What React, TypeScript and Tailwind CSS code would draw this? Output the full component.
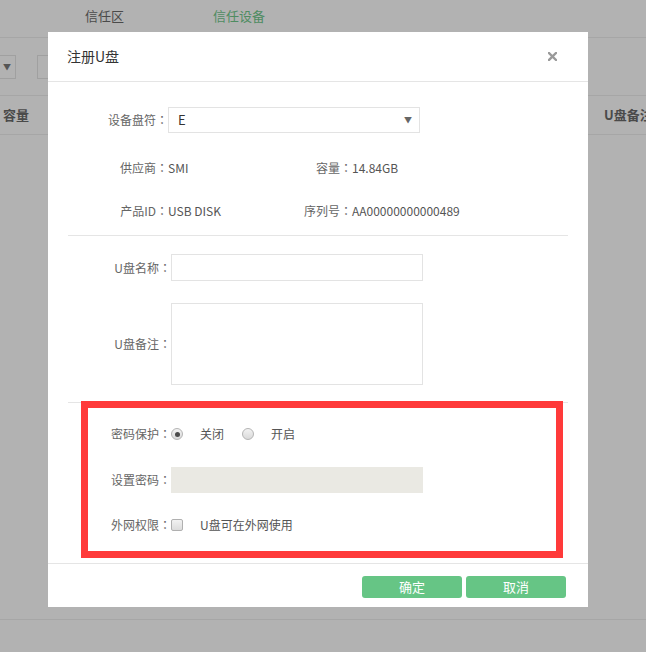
const font = "font-['Noto_Sans_CJK_SC','Noto_Sans',sans-serif]";

// fullwidth colon centred like the reference (TC puts it in the middle of the em box)
function Colon({ text }: { text: string }) {
  if (!text.endsWith("：")) return <>{text}</>;
  return (
    <>
      {text.slice(0, -1)}
      <span className="font-['Noto_Sans_CJK_TC',sans-serif]">：</span>
    </>
  );
}

function Radio({ checked }: { checked?: boolean }) {
  return (
    <span className="flex h-[12px] w-[12px] items-center justify-center rounded-full border border-[#b4b4b4] bg-gradient-to-b from-[#f2f2f2] to-[#d9d9d9]">
      {checked ? <span className="h-[5px] w-[5px] rounded-full bg-[#4a4a4a]" /> : null}
    </span>
  );
}

function Field({ label, width = "w-[123px]", children }: { label: string; width?: string; children: React.ReactNode }) {
  return (
    <div className="flex items-center">
      <span className={`${width} shrink-0 text-right leading-[20px] text-[#666]`}>
        <Colon text={label} />
      </span>
      {children}
    </div>
  );
}

function InfoRow({ a, av, b, bv }: { a: string; av: string; b: string; bv: string }) {
  return (
    <div className="flex h-[20px] items-center leading-[20px] text-[#666]">
      <span className="w-[120px] text-right">
        <Colon text={a} />
      </span>
      <span className="w-[100px] text-[#555]">{av}</span>
      <span className="w-[84px] text-right">
        <Colon text={b} />
      </span>
      <span className="text-[#555]">{bv}</span>
    </div>
  );
}

export default function App() {
  return (
    <div className={`relative h-[652px] w-[646px] overflow-hidden bg-[#b2b2b2] text-[12px] ${font}`}>
      {/* page behind the dialog */}
      <div className="flex h-[38px] items-center border-b border-[#a6a6a6] pb-[5px] text-[13px]">
        <span className="ml-[85px] text-[#4a4a4a]">信任区</span>
        <span className="ml-[89px] text-[#4e8c61]">信任设备</span>
      </div>
      <div className="flex h-[58px] items-center gap-[21px] border-b border-[#a6a6a6]">
        <div className="flex h-[24px] w-[16px] items-center justify-end border border-l-0 border-[#a0a0a0] pr-[4px] text-[8px] text-[#555]">
          ▼
        </div>
        <div className="h-[24px] w-[40px] border border-[#a0a0a0]" />
      </div>
      <div className="flex h-[39px] items-center border-b border-[#a6a6a6] text-[13px] font-bold text-[#4a4a4a]">
        <span className="ml-[3px]">容量</span>
        <span className="flex-1" />
        <span className="w-[42px] overflow-hidden whitespace-nowrap">U盘备注</span>
      </div>
      <div className="h-[485px] border-b border-[#a6a6a6]" />

      {/* dialog */}
      <div className="absolute left-[48px] top-[32px] w-[540px] bg-white">
        <div className="flex h-[50px] items-center justify-between border-b border-[#e5e5e5] pl-[19px] pr-[31px]">
          <span className="text-[14px] text-[#333]">注册U盘</span>
          <svg width="9" height="9" viewBox="0 0 9 9">
            <path d="M1 1 L8 8 M8 1 L1 8" stroke="#9a9a9a" strokeWidth="2.4" strokeLinecap="square" />
          </svg>
        </div>

        <div className="pt-[25px]">
          <Field label="设备盘符：" width="w-[120px]">
            <div className="flex h-[26px] w-[252px] items-center justify-between border border-[#e3e3e3] pl-[9px] pr-[7px] text-[13px] text-[#333]">
              <span>E</span>
              <span className="text-[8px] text-[#666]">▼</span>
            </div>
          </Field>

          <div className="mt-[25px]">
            <InfoRow a="供应商：" av="SMI" b="容量：" bv="14.84GB" />
          </div>
          <div className="mt-[23px]">
            <InfoRow a="产品ID：" av="USB DISK" b="序列号：" bv="AA00000000000489" />
          </div>

          <div className="mx-[20px] mt-[14px] border-t border-[#e5e5e5]" />

          <div className="mt-[18px]">
            <Field label="U盘名称：">
              <div className="h-[27px] w-[252px] border border-[#e3e3e3]" />
            </Field>
          </div>
          <div className="mt-[22px]">
            <Field label="U盘备注：">
              <div className="h-[82px] w-[252px] border border-[#e3e3e3]" />
            </Field>
          </div>

          <div className="mx-[20px] mt-[17px] border-t border-[#e5e5e5]">
            <div className="-mt-[2px] ml-[13px] mr-[5px] border-[7px] border-[#ff3a3a] pb-[16px] pt-[16px]">
              <div className="flex h-[20px] items-center">
                <span className="w-[83px] text-right text-[#666]">
                  <Colon text="密码保护：" />
                </span>
                <Radio checked />
                <span className="ml-[17px] text-[#555]">关闭</span>
                <span className="ml-[18px]">
                  <Radio />
                </span>
                <span className="ml-[17px] text-[#555]">开启</span>
              </div>
              <div className="mt-[23px] flex items-center">
                <span className="w-[83px] text-right text-[#666]">
                  <Colon text="设置密码：" />
                </span>
                <div className="h-[26px] w-[252px] bg-[#eae9e3]" />
              </div>
              <div className="mt-[22px] flex h-[20px] items-center">
                <span className="w-[83px] text-right text-[#666]">
                  <Colon text="外网权限：" />
                </span>
                <span className="h-[12px] w-[12px] rounded-[2px] border border-[#b0b0b0] bg-gradient-to-b from-[#f2f2f2] to-[#dcdcdc]" />
                <span className="ml-[17px] text-[#555]">U盘可在外网使用</span>
              </div>
            </div>
          </div>
        </div>

        <div className="mt-[5px] flex justify-end gap-[4px] border-t border-[#e5e5e5] pb-[9px] pr-[22px] pt-[12px]">
          <button className="h-[22px] w-[100px] rounded-[3px] bg-[#66c585] text-[13px] leading-[22px] text-white">确定</button>
          <button className="h-[22px] w-[100px] rounded-[3px] bg-[#66c585] text-[13px] leading-[22px] text-white">取消</button>
        </div>
      </div>
    </div>
  );
}
